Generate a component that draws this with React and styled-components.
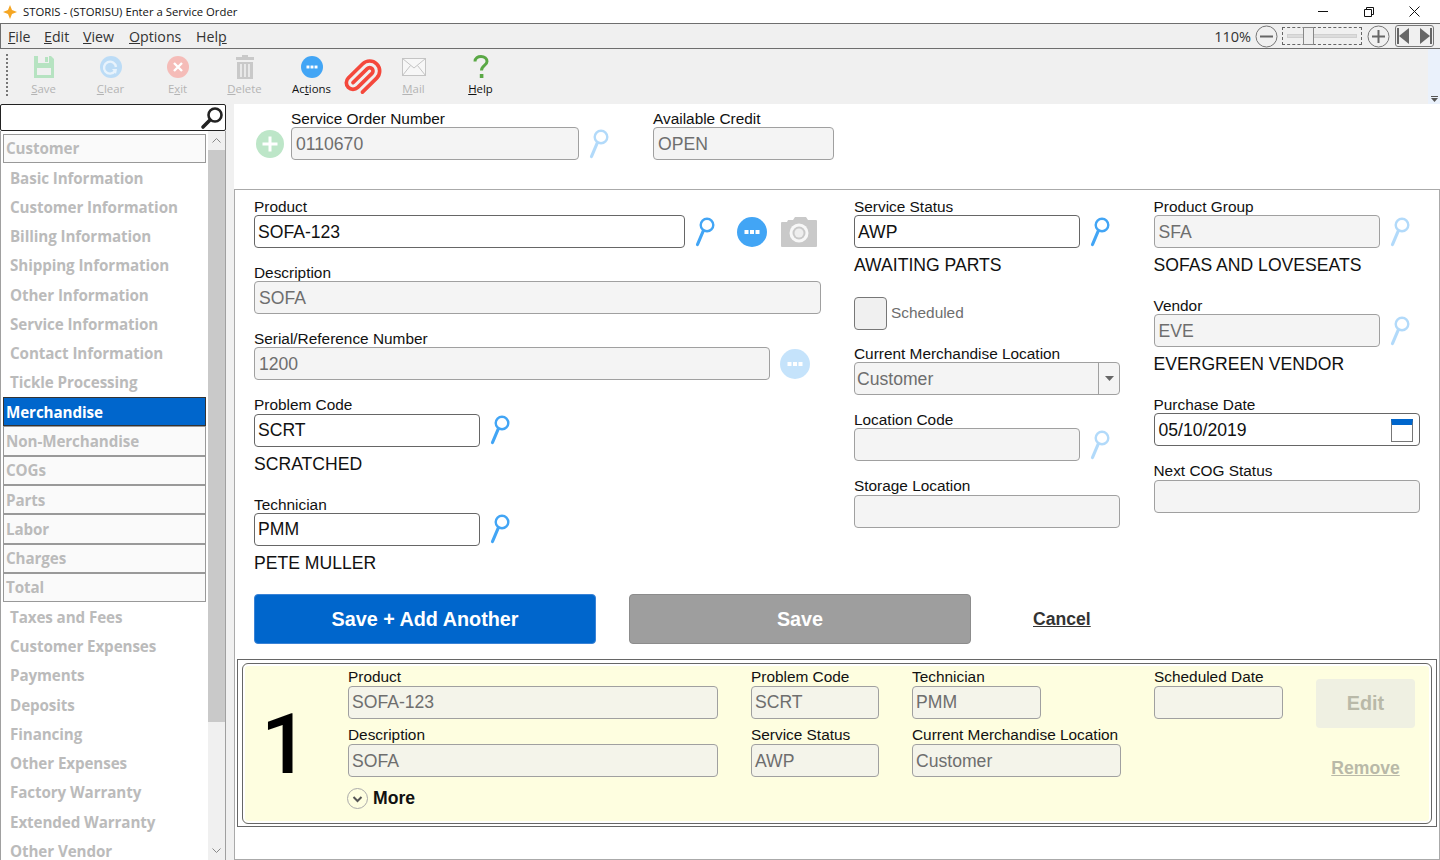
import React from "react";
import styled, { createGlobalStyle } from "styled-components";
import { Paperclip } from "lucide-react";

const Global = createGlobalStyle`
  html, body { margin: 0; padding: 0; background: #fff; }
  * { box-sizing: border-box; }
`;

const Win = styled.div`
  width: 1440px; height: 860px; overflow: hidden; display: flex; flex-direction: column;
  background: #f0f0f0; font-family: "Liberation Sans", Arial, sans-serif; color: #111;
`;
const TitleBar = styled.div`
  height: 23px; background: #fff; display: flex; align-items: center; padding: 0 3px 0 3px;
  font-family: "Open Sans", sans-serif; font-size: 11.3px; color: #111; flex: none;
`;
const TitleText = styled.span` margin-left: 6px; flex: 1; `;
const WinBtn = styled.div`
  width: 45.500px; height: 23px; display: flex; align-items: center; justify-content: center; flex: none;
`;
const Menu = styled.div`
  height: 26px; flex: none; background: #f0f0f0; border: 1px solid #6e6e6e; border-width: 1.5px 0 1.5px 1px;
  display: flex; align-items: center; padding-left: 7px;
  font-family: "Open Sans", sans-serif; font-size: 14.2px; color: #333;
`;
const MenuItem = styled.span` width: ${p => p.$w}px; flex: none; `;
const Spacer = styled.div` flex: 1; `;
const TopGap = styled.div` flex: 0 0 44px; `;
const ZoomText = styled.span` font-size: 14.5px; color: #333; margin-right: 4px; `;
const SliderBox = styled.div`
  width: 80px; height: 18px; margin: 0 5px 0 4px; border: 1px dashed #666; display: flex; align-items: center; padding: 0 4px; position: relative; flex: none;
`;
const SliderTrack = styled.div` flex: 1; height: 4px; background: #dcdcdc; border: 1px solid #d0d0d0; `;
const SliderThumb = styled.div`
  position: absolute; left: 20px; top: -1px; width: 11px; height: 18px; background: #eee; border: 1px solid #888;
`;
const NavBox = styled.div`
  width: 39px; height: 22px; margin: 0 6px 0 5px; border: 1px solid #777; border-radius: 3px; display: flex; align-items: center; justify-content: space-between; flex: none;
`;
const Toolbar = styled.div`
  height: 55px; flex: none; display: flex; align-items: flex-start; position: relative; background: #f0f0f0;
`;
const Grip = styled.div`
  width: 2px; height: 42px; margin: 5px 2px 0 6px; border-left: 2px dotted #777; flex: none;
`;
const ToolBtn = styled.div`
  width: ${p => p.$w || 67}px; flex: none; display: flex; flex-direction: column; align-items: center;
  font-family: "Open Sans", sans-serif; font-size: 11.4px; color: ${p => (p.$on ? "#111" : "#b4b4b4")};
  padding-top: 5px;
`;
const ToolIcon = styled.div`
  height: 26px; display: flex; align-items: center; justify-content: center; margin-bottom: 1px;
`;
const ToolLabel = styled.span` line-height: 16px; `;
const Overflow = styled.div`
  position: absolute; right: 0; top: 0; bottom: 0; width: 12px; background: #eaf1fb;
  display: flex; align-items: flex-end; justify-content: center; padding-bottom: 2px;
`;
const Body = styled.div` flex: 1; display: flex; min-height: 0; `;
const Sidebar = styled.div` width: 226px; flex: none; display: flex; flex-direction: column; min-height: 0; `;
const SearchBox = styled.div`
  height: 27px; flex: none; background: #fff; border: 1px solid #222; border-radius: 2px; display: flex; justify-content: flex-end; align-items: center; padding-right: 1px;
`;
const NavList = styled.div`
  flex: 1; min-height: 0; display: flex; background: #fff; border: 1px solid #a0a0a0; border-width: 0 1px; overflow: hidden;
`;
const Items = styled.div`
  width: 206px; flex: none; padding: 2.600px 0 0 2px; display: flex; flex-direction: column;
  font-family: "Open Sans", sans-serif; font-weight: 700; font-size: 15.2px; letter-spacing: -0.1px; color: #bbb;
`;
const NavItem = styled.div`
  height: 29.29px; flex: none; display: flex; align-items: center; padding-left: 7px;
`;
const NavHead = styled.div`
  height: 29.29px; flex: none; display: flex; align-items: center; padding-left: 2px; width: 203px;
  background: ${p => (p.$active ? "#0066cc" : "#fafafa")}; color: ${p => (p.$active ? "#fff" : "#bbb")};
  border: 1px solid ${p => (p.$active ? "#333" : "#999")};
`;
const Scroll = styled.div`
  width: 17px; margin-left: 1px; flex: none; background: #f0f0f0; display: flex; flex-direction: column;
`;
const ScrollArrow = styled.div` height: 19px; flex: none; display: flex; align-items: center; justify-content: center; `;
const ScrollThumb = styled.div` height: 572px; flex: none; background: #c9c9c9; `;
const ScrollRest = styled.div` flex: 1; `;

const Main = styled.div` flex: 1; margin-left: 8px; display: flex; flex-direction: column; min-width: 0; background: #fff; `;
const TopForm = styled.div` height: 85px; flex: none; display: flex; padding: 7px 0 0 22px; `;
const PlusWrap = styled.div` width: 35px; flex: none; padding-top: 19px; `;
const Panel = styled.div`
  flex: 1; min-height: 0; border: 1px solid #aaa; display: flex; flex-direction: column; padding: 8.7px 0 0;
`;
const Cols = styled.div`
  display: grid; grid-template-columns: 600px 299.500px 266px; padding-left: 19px; height: 395.3px;
`;
const Col = styled.div` display: flex; flex-direction: column; `;
const Field = styled.div` margin-bottom: 16.9px; flex: none; `;
const Label = styled.div` font-size: 15.4px; line-height: 15.8px; color: #111; white-space: nowrap; height: 16.33px; `;
const Row = styled.div` display: flex; align-items: center; `;
const Input = styled.div`
  width: ${p => p.$w}px; height: 33px; flex: none; border-radius: 4px; display: flex; align-items: center;
  padding: 1px 0 0 ${p => p.$pl || 3}px; font-size: 17.6px; white-space: nowrap;
  border: 1px solid ${p => (p.$on ? "#666" : "#a0a0a0")};
  background: ${p => (p.$on ? "#fff" : p.$card ? "#f4f4ea" : "#f4f4f4")};
  color: ${p => (p.$on ? "#111" : "#6e6e6e")};
  position: relative;
`;
const SelectArrow = styled.div`
  position: absolute; right: 0; top: 0; bottom: 0; width: 21px; border-left: 1px solid #a0a0a0; display: flex; align-items: center; justify-content: center;
`;
const CalIcon = styled.div`
  position: absolute; right: 6px; top: 5px; width: 22px; height: 23px; border: 1px solid #777; border-top: 6px solid #0066cc; background: #fff;
`;
const Sub = styled.div` height: 33px; font-size: 17.6px; line-height: 16px; padding-top: 9px; color: #111; white-space: nowrap; `;
const CheckRow = styled.div` display: flex; align-items: center; height: 33px; margin: -1px 0 16px; font-size: 15.4px; color: #6e6e6e; `;
const CheckBox = styled.div` width: 33px; height: 33px; border: 1px solid #777; border-radius: 4px; background: #f0f0f0; margin-right: 4px; `;
const Icon = styled.span` display: inline-flex; flex: none; margin-left: ${p => p.$ml || 0}px; `;
const Actions = styled.div` display: flex; align-items: center; height: 50px; padding-left: 19px; flex: none; margin-bottom: 15px; `;
const BigBtn = styled.div`
  width: 342px; height: 50px; margin-right: 33px; display: flex; align-items: center; justify-content: center; flex: none;
  font-weight: 700; font-size: 19.8px; color: #fff; border-radius: 4px; padding-top: 1px;
  background: ${p => p.$primary ? "#0066cc" : "#9e9e9e"};
  border: 1.500px solid ${p => p.$primary ? "#3a83d6" : "#8c8c8c"};
`;
const CancelLink = styled.a` margin-left: 29px; padding-top: 2px; font-weight: 700; font-size: 17.6px; color: #333; text-decoration: underline; `;
const CardOuter = styled.div`
  height: 168px; margin: 0 2px; border: 1px solid #666; padding: 3px 4px 2px; flex: none;
`;
const Card = styled.div`
  height: 100%; border: 1px solid #666; border-radius: 6px; background: #fefee0; box-shadow: inset 0 0 0 2px #fff;
  display: flex; padding: 5px 0 0 0;
`;
const CardNum = styled.div`
  width: 105px; flex: none; font-family: Roboto, sans-serif; font-weight: 500; font-size: 84px; line-height: 1; padding: 34px 0 0 18px; color: #000;
`;
const CardGrid = styled.div`
  display: grid; grid-template-columns: 370px 128px 129px 47px 129px; column-gap: 33px; grid-auto-rows: 58.3px; align-content: start;
`;
const CardField = styled.div` grid-column: ${p => p.$col}; grid-row: ${p => p.$row}; `;
const CardLabel = styled(Label)` height: 17px; line-height: 16.33px; `;
const More = styled.div`
  grid-column: 1; grid-row: 3; display: flex; align-items: center; gap: 5px; font-weight: 700; font-size: 17.6px; color: #111; height: 24px; margin: 1px 0 0 -1px;
`;
const CardSide = styled.div`
  margin-left: 33px; width: 99px; flex: none; display: flex; flex-direction: column; align-items: center; padding-top: 10px;
`;
const EditBtn = styled.div`
  width: 99px; height: 49px; border-radius: 4px; background: #eff0e2; color: #b9b9a8; font-weight: 700; font-size: 19.8px; display: flex; align-items: center; justify-content: center;
`;
const RemoveLink = styled.a` margin-top: 30px; font-weight: 700; font-size: 17.6px; color: #b9b9a8; text-decoration: underline; `;

const Mag = ({ dim }) => (
  <svg width="20" height="32" viewBox="0 0 20 32" style={{ opacity: dim ? 0.4 : 1 }}>
    <circle cx="12" cy="9" r="6.3" fill="none" stroke="#42a5f5" strokeWidth="2.4" />
    <path d="M8 15.500 L2.500 28.500" stroke="#42a5f5" strokeWidth="3.2" strokeLinecap="round" />
  </svg>
);
const Dots = ({ size = 30, dim }) => (
  <svg width={size} height={size} viewBox="0 0 30 30" style={{ opacity: dim ? 0.3 : 1 }}>
    <circle cx="15" cy="15" r="15" fill="#42a5f5" />
    <rect x="7.500" y="13" width="4" height="4" fill="#fff" />
    <rect x="13" y="13" width="4" height="4" fill="#fff" />
    <rect x="18.500" y="13" width="4" height="4" fill="#fff" />
  </svg>
);
const Camera = () => (
  <svg width="36" height="30" viewBox="0 0 36 30">
    <path d="M1 5 h5 l1-2 h5 l2-3 h11 l2 3 h8 q1 0 1 1 v25 q0 1-1 1 H1 q-1 0-1-1 V6 q0-1 1-1z" fill="#c9c9c9" />
    <circle cx="18" cy="16" r="9.500" fill="#fff" opacity="0.85" />
    <circle cx="18" cy="16" r="6.500" fill="#c9c9c9" />
    <circle cx="18" cy="16" r="4.500" fill="#eee" />
  </svg>
);

const SIDE = [
  ["h", "Customer"], ["i", "Basic Information"], ["i", "Customer Information"], ["i", "Billing Information"],
  ["i", "Shipping Information"], ["i", "Other Information"], ["i", "Service Information"], ["i", "Contact Information"],
  ["i", "Tickle Processing"], ["a", "Merchandise"], ["h", "Non-Merchandise"], ["h", "COGs"], ["h", "Parts"], ["h", "Labor"],
  ["h", "Charges"], ["h", "Total"], ["i", "Taxes and Fees"], ["i", "Customer Expenses"], ["i", "Payments"], ["i", "Deposits"],
  ["i", "Financing"], ["i", "Other Expenses"], ["i", "Factory Warranty"], ["i", "Extended Warranty"], ["i", "Other Vendor"],
];

const Tool = ({ w, on, icon, pre, u, post }) => (
  <ToolBtn $w={w} $on={on}>
    <ToolIcon>{icon}</ToolIcon>
    <ToolLabel>{pre}<u>{u}</u>{post}</ToolLabel>
  </ToolBtn>
);

const F = ({ label, w, on, value, sub, after, pl, children }) => (
  <Field>
    <Label>{label}</Label>
    <Row>
      <Input $w={w} $on={on} $pl={pl || (on ? 3 : 4)}>{value}{children}</Input>
      {after}
    </Row>
    {sub && <Sub>{sub}</Sub>}
  </Field>
);

const CF = ({ col, row, label, value, w }) => (
  <CardField $col={col} $row={row}>
    <CardLabel>{label}</CardLabel>
    <Input $card $w={w}>{value}</Input>
  </CardField>
);

export default function App() {
  return (
    <Win>
      <Global />
      <TitleBar>
        <svg width="14" height="14" viewBox="0 0 14 14"><path d="M7 0 L9 5 L14 7 L9 9 L7 14 L5 9 L0 7 L5 5Z" fill="#f5a623" /></svg>
        <TitleText>STORIS - (STORISU) Enter a Service Order</TitleText>
        <WinBtn><svg width="10" height="2"><rect width="10" height="1" fill="#111" /></svg></WinBtn>
        <WinBtn><svg width="10" height="10" viewBox="0 0 10 10" fill="none" stroke="#111"><path d="M.5 2.500h7v7h-7z" /><path d="M2.500 2.500v-2h7v7h-2" /></svg></WinBtn>
        <WinBtn><svg width="11" height="11" viewBox="0 0 11 11" stroke="#111"><path d="M.5.5l10 10M10.500.5l-10 10" /></svg></WinBtn>
      </TitleBar>
      <Menu>
        <MenuItem $w={36}><u>F</u>ile</MenuItem>
        <MenuItem $w={39}><u>E</u>dit</MenuItem>
        <MenuItem $w={46}><u>V</u>iew</MenuItem>
        <MenuItem $w={67}><u>O</u>ptions</MenuItem>
        <MenuItem $w={40}>Hel<u>p</u></MenuItem>
        <Spacer />
        <ZoomText>110%</ZoomText>
        <svg width="23" height="23" viewBox="0 0 23 23"><circle cx="11.500" cy="11.500" r="10.500" fill="none" stroke="#777" /><rect x="5" y="10.500" width="13" height="2" fill="#666" /></svg>
        <SliderBox><SliderTrack /><SliderThumb /></SliderBox>
        <svg width="23" height="23" viewBox="0 0 23 23"><circle cx="11.500" cy="11.500" r="10.500" fill="none" stroke="#777" /><path d="M5 10.500h13v2H5zM10.500 5h2v13h-2z" fill="#666" /></svg>
        <NavBox>
          <svg width="14" height="18" viewBox="0 0 14 18"><path d="M1 1h2v16H1zM13 1v16L3 9z" fill="#666" /></svg>
          <svg width="14" height="18" viewBox="0 0 14 18"><path d="M13 1h-2v16h2zM1 1v16l10-8z" fill="#666" /></svg>
        </NavBox>
      </Menu>
      <Toolbar>
        <Grip />
        <Tool pre="" u="S" post="ave" icon={
          <svg width="22" height="24" viewBox="0 0 22 24"><path d="M1 1h17l3 3v19H1z" fill="#b6e3c1" /><rect x="5" y="1" width="11" height="7" fill="#f0f0f0" /><rect x="12" y="2" width="3" height="5" fill="#b6e3c1" /><rect x="4" y="13" width="14" height="7" fill="#f0f0f0" /></svg>
        } />
        <Tool pre="" u="C" post="lear" icon={
          <svg width="22" height="22" viewBox="0 0 22 22"><circle cx="11" cy="11" r="11" fill="#bcdcf6" /><path d="M15 15 a6 6 0 1 1 1-4" fill="none" stroke="#e8f3fc" strokeWidth="2.400" /><path d="M12 13l5 0-1 5z" fill="#e8f3fc" /></svg>
        } />
        <Tool pre="E" u="x" post="it" icon={
          <svg width="22" height="22" viewBox="0 0 22 22"><circle cx="11" cy="11" r="11" fill="#f5bcb8" /><path d="M7 7l8 8M15 7l-8 8" stroke="#fff" strokeWidth="2.400" /></svg>
        } />
        <Tool pre="" u="D" post="elete" icon={
          <svg width="18" height="24" viewBox="0 0 18 24"><path d="M6 2V0h6v2h6v3H0V2zM1 7h16v17H1z" fill="#c9c9c9" /><path d="M5 9v13M9 9v13M13 9v13" stroke="#f0f0f0" strokeWidth="1.600" /></svg>
        } />
        <Tool on pre="Ac" u="t" post="ions" icon={<Dots size={22} />} />
        <ToolBtn $w={35}>
          <Paperclip size={40} color="#f4483c" strokeWidth={2.2} style={{ transform: "translate(0px,2px) scaleX(-1) rotate(90deg)" }} />
        </ToolBtn>
        <Tool pre="" u="M" post="ail" icon={
          <svg width="24" height="18" viewBox="0 0 24 18" fill="#f7f7f7" stroke="#c4c4c4"><rect x=".5" y=".5" width="23" height="17" /><path d="M.5.5L12 10 23.500.5M.5 17.500L8.500 7.500M23.500 17.500L15.500 7.500" fill="none" /></svg>
        } />
        <Tool on pre="" u="H" post="elp" icon={
          <svg width="16" height="24" viewBox="0 0 16 24"><path d="M2 6.500 C2 3 5 1.500 8 1.500 C11.500 1.500 14 3.500 14 6.500 C14 10.500 8.500 10.500 8.500 15.500" fill="none" stroke="#5aa845" strokeWidth="3" /><rect x="6.800" y="19" width="3.600" height="4" fill="#5aa845" /></svg>
        } />
        <Overflow>
          <svg width="7" height="6" viewBox="0 0 7 6"><path d="M0 0h7v1H0zM0 2h7L3.500 6z" fill="#555" /></svg>
        </Overflow>
      </Toolbar>
      <Body>
        <Sidebar>
          <SearchBox>
            <svg width="24" height="24" viewBox="0 0 24 24"><circle cx="15" cy="9" r="6.500" fill="none" stroke="#222" strokeWidth="2.600" /><path d="M10 14 L3 21" stroke="#222" strokeWidth="3.600" strokeLinecap="round" /></svg>
          </SearchBox>
          <NavList>
            <Items>
              {SIDE.map(([k, t]) =>
                k === "i" ? <NavItem key={t}>{t}</NavItem> : <NavHead key={t} $active={k === "a"}>{t}</NavHead>
              )}
            </Items>
            <Scroll>
              <ScrollArrow><svg width="9" height="5" viewBox="0 0 9 5" fill="none" stroke="#888"><path d="M.5 4.500l4-4 4 4" /></svg></ScrollArrow>
              <ScrollThumb />
              <ScrollRest />
              <ScrollArrow><svg width="9" height="5" viewBox="0 0 9 5" fill="none" stroke="#888"><path d="M.5.5l4 4 4-4" /></svg></ScrollArrow>
            </Scroll>
          </NavList>
        </Sidebar>
        <Main>
          <TopForm>
            <PlusWrap>
              <svg width="28" height="28" viewBox="0 0 28 28"><circle cx="14" cy="14" r="14" fill="#bde6c8" /><path d="M6.500 12.500h15v3h-15zM12.500 6.500h3v15h-3z" fill="#fff" /></svg>
            </PlusWrap>
            <F label="Service Order Number" w={288} value="0110670" after={<Icon $ml={10}><Mag dim /></Icon>} />
            <TopGap />
            <F label="Available Credit" w={181} value="OPEN" />
          </TopForm>
          <Panel>
            <Cols>
              <Col>
                <F label="Product" w={431} on value="SOFA-123" after={<>
                  <Icon $ml={10}><Mag /></Icon>
                  <Icon $ml={22}><Dots /></Icon>
                  <Icon $ml={14}><Camera /></Icon>
                </>} />
                <F label="Description" w={567} value="SOFA" />
                <F label="Serial/Reference Number" w={516} value="1200" after={<Icon $ml={10}><Dots dim /></Icon>} />
                <F label="Problem Code" w={226} on value="SCRT" sub="SCRATCHED" after={<Icon $ml={10}><Mag /></Icon>} />
                <F label="Technician" w={226} on value="PMM" sub="PETE MULLER" after={<Icon $ml={10}><Mag /></Icon>} />
              </Col>
              <Col>
                <F label="Service Status" w={226} on value="AWP" sub="AWAITING PARTS" after={<Icon $ml={10}><Mag /></Icon>} />
                <CheckRow><CheckBox />Scheduled</CheckRow>
                <F label="Current Merchandise Location" w={266} value="Customer" pl={2}>
                  <SelectArrow><svg width="9" height="5" viewBox="0 0 9 5"><path d="M0 0h9L4.500 5z" fill="#666" /></svg></SelectArrow>
                </F>
                <F label="Location Code" w={226} value="" after={<Icon $ml={10}><Mag dim /></Icon>} />
                <F label="Storage Location" w={266} value="" />
              </Col>
              <Col>
                <F label="Product Group" w={226} value="SFA" sub="SOFAS AND LOVESEATS" after={<Icon $ml={10}><Mag dim /></Icon>} />
                <F label="Vendor" w={226} value="EVE" sub="EVERGREEN VENDOR" after={<Icon $ml={10}><Mag dim /></Icon>} />
                <F label="Purchase Date" w={266} on value="05/10/2019" pl={4}><CalIcon /></F>
                <F label="Next COG Status" w={266} value="" />
              </Col>
            </Cols>
            <Actions>
              <BigBtn $primary>Save + Add Another</BigBtn>
              <BigBtn>Save</BigBtn>
              <CancelLink>Cancel</CancelLink>
            </Actions>
            <CardOuter>
              <Card>
                <CardNum>1</CardNum>
                <CardGrid>
                  <CF col="1" row="1" label="Product" value="SOFA-123" w={370} />
                  <CF col="2" row="1" label="Problem Code" value="SCRT" w={128} />
                  <CF col="3" row="1" label="Technician" value="PMM" w={129} />
                  <CF col="5" row="1" label="Scheduled Date" value="" w={129} />
                  <CF col="1" row="2" label="Description" value="SOFA" w={370} />
                  <CF col="2" row="2" label="Service Status" value="AWP" w={128} />
                  <CF col="3 / span 2" row="2" label="Current Merchandise Location" value="Customer" w={209} />
                  <More>
                    <svg width="21" height="21" viewBox="0 0 21 21"><circle cx="10.500" cy="10.500" r="10" fill="none" stroke="#aaa" /><path d="M6.500 9l4 4 4-4" fill="none" stroke="#555" strokeWidth="2" /></svg>
                    More
                  </More>
                </CardGrid>
                <CardSide>
                  <EditBtn>Edit</EditBtn>
                  <RemoveLink>Remove</RemoveLink>
                </CardSide>
              </Card>
            </CardOuter>
          </Panel>
        </Main>
      </Body>
    </Win>
  );
}
